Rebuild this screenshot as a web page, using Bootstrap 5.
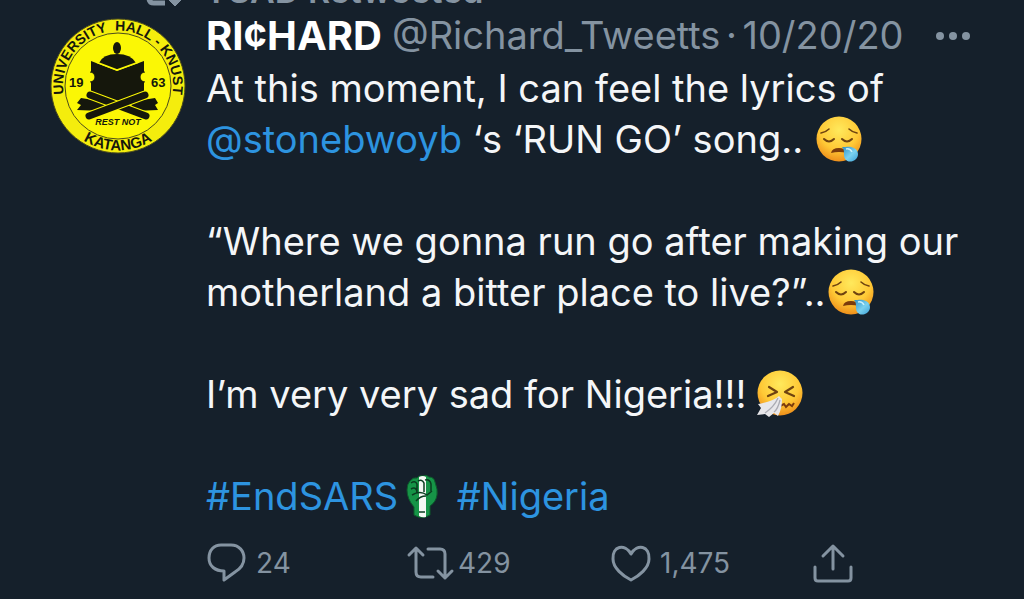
<!DOCTYPE html>
<html lang="en">
<head>
<meta charset="utf-8">
<meta name="viewport" content="width=device-width, initial-scale=1">
<title>Tweet by RI¢HARD</title>
<link href="https://cdn.jsdelivr.net/npm/bootstrap@5.3.0/dist/css/bootstrap.min.css" rel="stylesheet">
<style>
  body { background: #15202b; color: #fff; font-family: Inter, "Liberation Sans", sans-serif; overflow-x: hidden; }
  a { color: #2d94e0; text-decoration: none; }
  .tweet-muted, .tweet-muted a { color: #8493a1; }
  .tweet { padding-left: 50px; }
  .context-line { height: 8px; font-size: 34px; font-weight: 600; line-height: 34px; padding-left: 94px; gap: 18px; overflow: hidden; }
  .avatar { width: 136px; height: 136px; margin-top: 10px; }
  .tweet-row { gap: 20px; }
  .tweet-head { font-size: 38px; line-height: 55px; white-space: nowrap; }
  .tweet-head .tweet-name { font-size: 40px; font-weight: 700; color: #fff; margin-right: 10px; }
  .tweet-dot { width: 22px; text-align: center; }
  .tweet-text { font-size: 38px; line-height: 51px; color: #f4f6f8; white-space: nowrap; }
  .emoji { width: 48px; height: 48px; margin-top: -8px; }
  .fist { width: 36px; height: 48px; margin: -8px 6px 0 6px; }
  .tweet-more { margin-left: 31px; }
  .tweet-actions { padding-top: 17px; }
  .tweet-actions button { width: 202px; color: inherit; gap: 8px; font-size: 28px; line-height: 48px; }
  .action-icon { width: 42px; height: 42px; fill: none; stroke: currentColor; stroke-width: 3; stroke-linejoin: round; stroke-linecap: round; }
</style>
</head>
<body>
<svg class="position-absolute" width="0" height="0" aria-hidden="true">
  <defs>
    <radialGradient id="face" cx=".5" cy=".3" r=".72">
      <stop offset="0" stop-color="#ffe95c"/><stop offset=".6" stop-color="#ffc936"/><stop offset="1" stop-color="#ed8b19"/>
    </radialGradient>
    <linearGradient id="drop" x1="0" y1="0" x2="1" y2="1"><stop offset="0" stop-color="#2d8ec6"/><stop offset=".55" stop-color="#7ad1ee"/><stop offset="1" stop-color="#3a9fd6"/></linearGradient>
  </defs>
  <symbol id="sleepy" viewBox="0 0 48 48">
    <circle cx="25" cy="24" r="22.5" fill="url(#face)"/>
    <g fill="none" stroke="#6f4310" stroke-linecap="round">
      <path d="M10 24q5 5 10 0M28 24q5 5 10 0" stroke-width="2"/>
      <path d="M7 18q5-1 8-4M35 14q3 3 8 4" stroke-width="1.6"/>
    </g>
    <path d="M17 38q1-5 8-5 6 0 8 5-8-2-16 0z" fill="#7b3b0c"/>
    <path d="M28 32c5 0 8-1 12 1 6 3 5 11-1 13-6 2-9-2-9-6 0-4 0-6-2-8z" fill="url(#drop)"/>
    <path d="M32 34q4-1 6 3" fill="none" stroke="#c9f0fb" stroke-width="1.5"/>
  </symbol>
</svg>

<main class="tweet">
  <div class="context-line tweet-muted d-flex align-items-end">
    <svg width="42" height="40" viewBox="0 0 42 40" fill="none" stroke="currentColor" stroke-width="5" class="flex-shrink-0" aria-hidden="true"><path d="M5 8v22q0 5 5 5h11"/><path d="M22 29h18l-9 9z" fill="currentColor" stroke-width="1"/></svg>
    <span>YSAD Retweeted</span>
  </div>
  <article class="tweet-row d-flex">
    <a href="#" class="flex-shrink-0" aria-label="RI¢HARD profile">
      <svg class="avatar d-block" viewBox="0 0 136 136" font-family="Liberation Sans, sans-serif" font-weight="700" fill="#15170c">
        <defs>
          <path id="arcTop" d="M13.500 75A55 55 0 1 1 122.500 75"/>
          <path id="arcBottom" d="M20 111A64.500 64.500 0 0 0 116 111"/>
        </defs>
        <circle cx="68" cy="68" r="67" fill="#f4ed0d" stroke="#4c4c1c"/>
        <circle cx="68" cy="68" r="53" fill="#fbf705" stroke="#4c4c1c" stroke-width="1"/>
        <text font-size="14"><textPath href="#arcTop" startOffset="50%" text-anchor="middle">UNIVERSITY&#160; HALL - KNUST</textPath></text>
        <text font-size="15"><textPath href="#arcBottom" startOffset="50%" text-anchor="middle">KATANGA</textPath></text>
        <text x="19" y="69" font-size="13">19</text><text x="101" y="69" font-size="13">63</text>
        <ellipse cx="67" cy="30" rx="4" ry="6"/>
        <path d="M49 45Q53 36 67 36T86 45L67 52z"/>
        <path d="M41 43L67 53 94 43V76L67 90 41 76z"/>
        <path d="M46 44L67 52 89 44" fill="none" stroke="#fbf705" stroke-width="1.500"/>
        <path d="M40 54a5 5 0 0 1 0 10M95 54a5 5 0 0 0 0 10" fill="#fbf705" stroke="#15170c"/>
        <path d="M31 80l25 4-4 9-25-1 4-5-4-2zM105 80l-25 4 4 9 24-1-3-5 3-2z"/>
        <g fill="none" stroke-linecap="round">
          <path d="M40 77L96 98" stroke="#fbf705" stroke-width="9"/><path d="M40 77L96 98" stroke="#15170c" stroke-width="7"/>
          <path d="M95 77L39 98" stroke="#fbf705" stroke-width="9"/><path d="M95 77L39 98" stroke="#15170c" stroke-width="7"/>
        </g>
        <text x="68" y="107" font-size="9" font-style="italic" text-anchor="middle">REST NOT</text>
      </svg>
    </a>
    <div class="flex-grow-1">
      <header class="tweet-head tweet-muted d-flex align-items-center">
        <a href="#" class="tweet-name">RI¢HARD</a>
        <a href="#">@Richard_Tweetts</a><span class="tweet-dot">·</span><time datetime="2020-10-20">10/20/20</time>
        <button type="button" class="tweet-more btn p-0 border-0 tweet-muted d-flex" aria-label="More"><svg width="36" height="10" viewBox="0 0 36 10" fill="currentColor"><circle cx="5" cy="5" r="4"/><circle cx="18" cy="5" r="4"/><circle cx="31" cy="5" r="4"/></svg></button>
      </header>
      <div class="tweet-text">
        <div>At this moment, I can feel the lyrics of</div>
        <div><a href="#">@stonebwoyb</a> ‘s ‘RUN GO’ song.. <svg class="emoji" role="img" aria-label="Sleepy face"><use href="#sleepy"/></svg></div>
        <br>
        <div>“Where we gonna run go after making our</div>
        <div>motherland a bitter place to live?”..<svg class="emoji" role="img" aria-label="Sleepy face"><use href="#sleepy"/></svg></div>
        <br>
        <div>I’m very very sad for Nigeria!!! <svg class="emoji" viewBox="0 0 48 48" role="img" aria-label="Sneezing face">
          <circle cx="23" cy="23" r="22.500" fill="url(#face)"/>
          <path d="M12 17l8 5-9 4M36 17l-8 5 9 4" fill="none" stroke="#6f4310" stroke-width="2.200" stroke-linecap="round" stroke-linejoin="round"/>
          <path d="M23 36l4-2 2 3 3-3 3 2 2-3" fill="none" stroke="#7b3b0c" stroke-width="2"/>
          <path d="M22 26q-5 5-21 8l3 4-4 7 8-1 4 3 5-4 4 3q4-7 4-17z" fill="#e7e7ea"/>
          <path d="M21 28q-4 9-13 15M23 30q-2 9-6 12" fill="none" stroke="#aaabb3" stroke-width="1.300"/>
        </svg></div>
        <br>
        <div><a href="#">#EndSARS<svg class="fist" viewBox="0 0 36 48" role="img" aria-label="Raised fist">
          <path d="M6 9q3-4 7-3 2-3 6-2 3-2 6 1 5 0 6 5 3 8 2 13-1 7-7 11v9q-8 5-16 0v-8Q3 27 3 18q0-6 3-9z" fill="#169447" stroke="#0c5a2b"/>
          <path d="M15 5q4-2 7 0v40q-4 1-7-1z" fill="#f4f8f3"/>
          <path d="M7 11q4-3 6 1v9M14 9q4-2 6 2v9M21 8q5-1 6 4v7M7 17q5-3 6 3M8 23q8-5 15 0l5-4M12 29q4-5 10-5M15 40h6" fill="none" stroke="#0a3d20" stroke-width="1.500"/>
        </svg></a> <a href="#">#Nigeria</a></div>
      </div>
      <footer class="tweet-actions tweet-muted d-flex">
        <button type="button" class="btn p-0 border-0 d-flex align-items-center" aria-label="Reply"><svg class="action-icon" viewBox="0 0 42 42"><path d="M15 3h10c8 0 13 6 13 13 0 7-4 11-9 14l-11 8v-9C9 29 3 24 3 16S8 3 15 3z"/></svg><span>24</span></button>
        <button type="button" class="btn p-0 border-0 d-flex align-items-center" aria-label="Retweet"><svg class="action-icon overflow-visible" viewBox="0 0 42 42"><path d="M1 13l7-7 7 7M8 6v24q0 5 5 5h12M20 7h12q5 0 5 5v24M30 29l7 7 7-7" /></svg><span>429</span></button>
        <button type="button" class="btn p-0 border-0 d-flex align-items-center" aria-label="Like"><svg class="action-icon" viewBox="0 0 42 42"><path d="M21 12C15 1 2 4 3 17c0 9 10 17 18 21 8-4 18-12 18-21C40 4 27 1 21 12z"/></svg><span>1,475</span></button>
        <button type="button" class="btn p-0 border-0 d-flex align-items-center" aria-label="Share"><svg class="action-icon" viewBox="0 0 42 42"><path d="M3 25v11q0 3 3 3h30q3 0 3-3V25M21 27V4M11 14L21 4l10 10"/></svg></button>
      </footer>
    </div>
  </article>
</main>
<script src="https://cdn.jsdelivr.net/npm/bootstrap@5.3.0/dist/js/bootstrap.bundle.min.js"></script>
</body>
</html>
